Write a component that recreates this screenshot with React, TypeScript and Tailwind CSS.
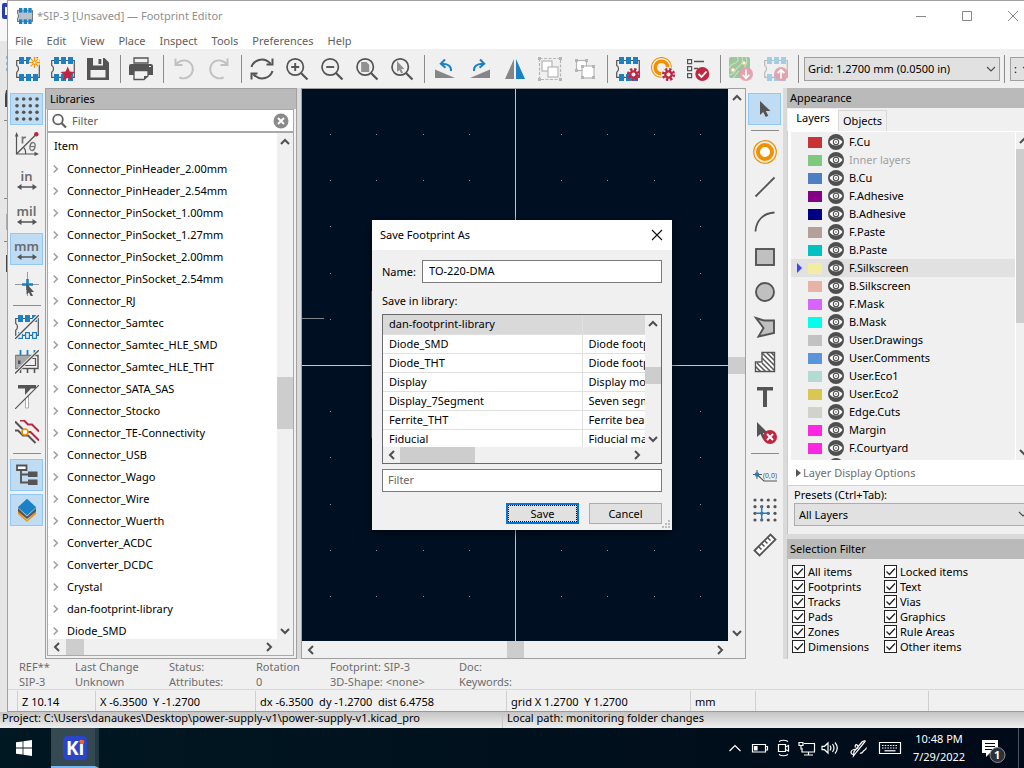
import React, { useState } from "react";

const DARK = "#545454";
const BLUE = "#1a81c4";
const RED = "#bf2641";
const ORANGE = "#f29100";

type Kids = { children?: React.ReactNode };

function Icon({ children }: Kids) {
  return (
    <svg viewBox="0 0 24 24" className="block size-6 shrink-0" fill="none" aria-hidden="true">
      {children}
    </svg>
  );
}

/* ---------- icon parts ---------- */

function Chip({ pad = BLUE, line = DARK, hollow = false }: { pad?: string; line?: string; hollow?: boolean }) {
  return (
    <>
      <path d="M3 3.5H.7v5c2.4 1 2.4 5.5 0 6.8v5H3M22 3.5h1.3v16.8H22M8 3.5h2M15 3.5h2M8 20.3h2M15 20.3h2" stroke={line} strokeWidth="1.2" />
      {[3, 10, 17].map((x) => (
        <React.Fragment key={x}>
          <rect x={x} y="0" width="5" height="7" fill={pad} />
          {hollow ? (
            <rect x={x + 0.6} y="17.6" width="3.8" height="5.8" stroke={pad} strokeWidth="1.2" />
          ) : (
            <rect x={x} y="17" width="5" height="7" fill={pad} />
          )}
        </React.Fragment>
      ))}
    </>
  );
}

function Gear() {
  return (
    <g>
      <circle cx="17.5" cy="17.5" r="4.3" fill={RED} />
      <circle cx="17.5" cy="17.5" r="5.2" stroke={RED} strokeWidth="2.8" strokeDasharray="2.3 1.784" />
      <circle cx="17.5" cy="17.5" r="2" fill="#f0f0f0" />
    </g>
  );
}

function ArrowBadge({ up }: { up?: boolean }) {
  return (
    <g opacity="0.95">
      <circle cx="17" cy="17" r="7" fill="#e5a0ae" />
      <path d={up ? "M17 21.5v-8M13.6 16.2 17 12.8l3.4 3.4" : "M17 12.5v8M13.6 17.8l3.4 3.4 3.4-3.4"} stroke="#fff" strokeWidth="1.7" />
    </g>
  );
}

function Lens({ children }: Kids) {
  return (
    <Icon>
      <circle cx="10.2" cy="10" r="8.2" stroke={DARK} strokeWidth="1.7" />
      <path d="m16 16 6.5 6.5" stroke={DARK} strokeWidth="2.2" />
      {children}
    </Icon>
  );
}

function Units({ label }: { label: string }) {
  return (
    <span className="flex flex-col items-center text-[13px] font-semibold text-[#6c6c6c]">
      <span className="h-[15px] leading-[15px]">{label}</span>
      <svg viewBox="0 0 20 6" className="block h-1.5 w-5" aria-hidden="true">
        <path d="M0 3 4.5 0v2.3h11V0L20 3l-4.5 3V3.7h-11V6z" fill={DARK} />
      </svg>
    </span>
  );
}

/* ---------- toolbar icons ---------- */

const icons: Record<string, React.ReactNode> = {
  newFootprint: (
    <Icon>
      <Chip />
      <circle cx="18.5" cy="5.5" r="5.5" fill="#f0f0f0" />
      <path d="M18.5 0v11M13 5.5h11M14.7 1.7l7.6 7.6M22.3 1.7l-7.6 7.6" stroke={ORANGE} strokeWidth="1.1" />
      <circle cx="18.5" cy="5.5" r="1.5" fill="#fff" stroke={ORANGE} strokeWidth=".8" />
    </Icon>
  ),
  star: (
    <Icon>
      <Chip />
      <path d="m16.7 9.5 2.1 5 5.2.4-4 3.4 1.3 5.2-4.6-2.8-4.6 2.8 1.3-5.2-4-3.4 5.200-.4z" fill={RED} />
    </Icon>
  ),
  save: (
    <Icon>
      <path d="M1 1h17.5L23 5.5V23H1z" fill={DARK} />
      <path d="M7 1h10v7.5H7z" fill="#f0f0f0" />
      <path d="M12.5 2h2.8v5h-2.8z" fill={DARK} />
      <path d="M4.5 13h15v7.5h-15z" fill="#f0f0f0" />
    </Icon>
  ),
  print: (
    <Icon>
      <path d="M5 1h14v5H5z" fill="#f0f0f0" stroke={DARK} strokeWidth="1.3" />
      <path d="M2 7h20a2 2 0 0 1 2 2v9h-5v-4H5v4H0V9a2 2 0 0 1 2-2" fill={DARK} />
      <path d="M5 13.5h14V19l-4 3.5H5z" fill="#f0f0f0" stroke={DARK} strokeWidth="1.3" />
      <path d="M15 22.5V19h4z" fill={DARK} />
      <path d="M20 9.5h1.8" stroke="#fff" />
    </Icon>
  ),
  undo: (
    <Icon>
      <path d="M3.500 1.500V8h7M4 7.500C8 2.500 15 2 18.800 6.500c3.400 4.200 2.400 10.500-2.300 13.400-2.800 1.700-6.400 1.800-9.200.4" stroke="#c0c0c0" strokeWidth="1.9" />
    </Icon>
  ),
  redo: (
    <Icon>
      <path d="M20.500 1.500V8h-7M20 7.500C16 2.500 9 2 5.200 6.500c-3.400 4.200-2.400 10.500 2.300 13.400 2.800 1.700 6.400 1.800 9.200.4" stroke="#c0c0c0" strokeWidth="1.9" />
    </Icon>
  ),
  refresh: (
    <Icon>
      <path d="M1.500 10C3.500 3.500 13-1 20.500 6.500M22.500 1.500v6h-6M22.500 14c-2 6.500-11.500 11-19 3.500M1.500 22.500v-6h6" stroke={DARK} strokeWidth="2" />
    </Icon>
  ),
  zoomIn: (
    <Lens>
      <path d="M10.200 6v8M6.200 10h8" stroke={DARK} strokeWidth="1.9" />
    </Lens>
  ),
  zoomOut: (
    <Lens>
      <path d="M6.200 10h8" stroke={DARK} strokeWidth="1.9" />
    </Lens>
  ),
  zoomPage: (
    <Lens>
      <path d="M6.200 5h5.300l2.700 2.700V15h-8z" fill="#909090" />
    </Lens>
  ),
  zoomPointer: (
    <Lens>
      <path d="M7 4v11l2.400-2 1.800 3.600 1.800-.9-1.800-3.600h3.200z" fill="#909090" />
    </Lens>
  ),
  rotateLeft: (
    <Icon>
      <path d="M2 12.500V21h20z" fill="#868686" />
      <path d="M18 14c.5-5-3.500-7.500-8.500-7M12 2.500 7.800 6.700l4.700 4" stroke={BLUE} strokeWidth="2" />
    </Icon>
  ),
  rotateRight: (
    <Icon>
      <path d="M22 12.500V21H2z" fill="#868686" />
      <path d="M6 14c-.5-5 3.500-7.500 8.500-7M12 2.500l4.200 4.200-4.700 4" stroke={BLUE} strokeWidth="2" />
    </Icon>
  ),
  mirror: (
    <Icon>
      <path d="M11 2v20H2z" fill="#868686" />
      <path d="M13 2v20h9z" fill={BLUE} />
    </Icon>
  ),
  group: (
    <Icon>
      <rect x="1.5" y="1.5" width="21" height="21" stroke="#b5b5b5" strokeWidth="1.2" strokeDasharray="3 1.5" />
      <rect x="4" y="4" width="10" height="10" fill="#fff" stroke="#b5b5b5" strokeWidth="1.2" />
      <rect x="10" y="10" width="10" height="10" fill="#fff" stroke="#b5b5b5" strokeWidth="1.2" />
      <path d="M0 0h3v3H0zM21 0h3v3h-3zM0 21h3v3H0zM21 21h3v3h-3z" fill="#b5b5b5" />
    </Icon>
  ),
  ungroup: (
    <Icon>
      <rect x="3.5" y="3.5" width="10" height="10" fill="#fff" stroke="#b5b5b5" strokeWidth="1.2" />
      <rect x="9" y="9" width="12" height="12" fill="#fff" stroke="#b5b5b5" strokeWidth="1.2" />
      <path d="M2 2h3v3H2zM12 2h3v3h-3zM2 12h3v3H2zM8 8h3v3H8zM19 8h3v3h-3zM8 19h3v3H8zM19 19h3v3h-3z" fill="#b5b5b5" />
    </Icon>
  ),
  footprintProps: (
    <Icon>
      <Chip />
      <Gear />
    </Icon>
  ),
  padProps: (
    <Icon>
      <circle cx="10.5" cy="10.5" r="10" stroke={ORANGE} strokeWidth="1.1" />
      <circle cx="10.5" cy="10.5" r="6.3" stroke={ORANGE} strokeWidth="3.6" />
      <circle cx="17.5" cy="17.5" r="7.5" fill="#f0f0f0" />
      <Gear />
    </Icon>
  ),
  checker: (
    <Icon>
      <path d="M1.600 2.600h4v4h-4zM1.600 9.600h4v4h-4zM1.600 16.600h4v4h-4z" stroke={DARK} strokeWidth="1.2" />
      <path d="M8 4.500h10M8 11.500h4" stroke={DARK} strokeWidth="1.3" />
      <circle cx="16.3" cy="17" r="7" fill={RED} />
      <path d="m12.500 17 3 3 5-5.500" stroke="#fff" strokeWidth="1.8" />
    </Icon>
  ),
  loadBoard: (
    <Icon>
      <rect width="21" height="21" rx="2" fill="#9cc69c" />
      <path d="M8 0c3 4-1 6-4 7s-3 3-4 4M13 0c2 5-1 8-4 10s-2 7-9 8M17 0c2 5 0 8-2 11M4 21c3-2 3-5 6-7" stroke="#c9e0c8" strokeWidth="1.1" />
      <circle cx="4" cy="13" r="1.8" fill="#fff" stroke="#f5d4a0" />
      <circle cx="15" cy="6" r="1.5" fill="#fff" stroke="#f5d4a0" />
      <ArrowBadge />
    </Icon>
  ),
  insertBoard: (
    <Icon>
      <Chip pad="#a3cde6" line="#b9b9b9" />
      <ArrowBadge up />
    </Icon>
  ),
  grid: (
    <Icon>
      {[2, 8.7, 15.3, 22].map((y) => [2, 8.7, 15.3, 22].map((x) => <circle key={`${x}-${y}`} cx={x} cy={y} r="1.8" fill={DARK} />))}
    </Icon>
  ),
  polar: (
    <Icon>
      <path d="M1.500 22 21 2.500" stroke={DARK} strokeWidth="1.3" />
      <path d="M1.500 4v18H20M8.500 15.500c1.800 1.500 2.300 4 2 6.500" stroke={DARK} strokeWidth="1.2" />
      <path d="M1.500 0 3.500 4.500H0zM24 22l-4.500-2.200v4.200z" fill={DARK} />
      <circle cx="21.3" cy="2.3" r="2.2" fill={RED} />
      <path d="M7.500 4.500v7M7.500 8c0-2 1.500-3 3.500-2.600" stroke="#777" strokeWidth="1.7" />
      <ellipse cx="17.5" cy="14.5" rx="2.5" ry="4" stroke="#777" strokeWidth="1.4" transform="rotate(12 17.5 14.5)" />
      <path d="M15 14.500h5" stroke="#777" strokeWidth="1.2" />
    </Icon>
  ),
  inch: <Units label="in" />,
  mil: <Units label="mil" />,
  mm: <Units label="mm" />,
  cursor: (
    <Icon>
      <path d="M12.500 0v24M0 12.500h24" stroke="#9a9a9a" />
      <path d="M12.500 7v11M7 12.500h11" stroke={BLUE} strokeWidth="2.6" />
      <path d="M11.500 11.500v11l2.500-2 2 4.500 2-1-2-4h3z" fill={DARK} />
    </Icon>
  ),
  padSketch: (
    <Icon>
      <Chip hollow />
      <path d="M0 24 24 0" stroke="#f0f0f0" strokeWidth="3.5" />
      <path d="M0 24 24 0" stroke={DARK} strokeWidth="1.3" />
    </Icon>
  ),
  graphicSketch: (
    <Icon>
      <path d="M5.500 0v5M12.500 0v5M19.500 0v5" stroke={BLUE} strokeWidth="1.8" />
      <path d="M5.500 18v5M12.500 18v5M19.500 18v5" stroke={DARK} strokeWidth="1.6" />
      <rect x="1" y="5.5" width="22" height="13" fill="#f0f0f0" stroke={DARK} strokeWidth="1.4" />
      <path d="M1 5.500h17.500l-13 13H1z" fill="#a8a8a8" />
      <path d="M16 8.500h4.500v7H9" stroke={DARK} strokeWidth="1.2" />
      <path d="M3 10.500h2.500v3.500H3z" fill={DARK} />
      <path d="M0 23.500 24 0" stroke="#f0f0f0" strokeWidth="3" />
      <path d="M0 23.500 24 0" stroke={DARK} strokeWidth="1.3" />
    </Icon>
  ),
  textSketch: (
    <Icon>
      <path d="M3 0h18v3.500h-5L10 10V3.500H3z" fill={DARK} />
      <path d="M10.500 13.500V23h3V10.500z" stroke="#aaa" fill="#fff" />
      <path d="M0 24 24 0" stroke={DARK} strokeWidth="1.2" />
    </Icon>
  ),
  contrast: (
    <Icon>
      <path d="M5 .5h4l4 4h4l7 7" stroke={RED} strokeWidth="2" />
      <path d="M12.500 12h3l8.500 8.500" stroke={RED} strokeWidth="2" />
      <path d="M0 1.500 8 9.500M0 10.500h3l5 5h5l7.500 7.500" stroke={DARK} strokeWidth="2" />
      <circle cx="10" cy="12" r="3" fill="#fff" stroke={ORANGE} strokeWidth="1.6" />
    </Icon>
  ),
  tree: (
    <Icon>
      <path d="M2 2.500h9.500V7H2z" fill="#fff" stroke={DARK} strokeWidth="1.8" />
      <path d="M6 7v12.500h7M6 11.500h7" stroke={DARK} strokeWidth="1.9" />
      <path d="M13 8.500h9.500V14H13zM13 16.500h9.500V22H13z" fill={DARK} />
    </Icon>
  ),
  layers: (
    <Icon>
      <path d="m3 13 9 9 9-9v3l-9 7.700L3 16z" fill={ORANGE} />
      <path d="m3 10 9 8.500 9-8.500v3.500L12 21l-9-7.500z" fill={DARK} />
      <path d="m12 .8 9.200 8.400-9.200 8.300-9.200-8.300z" fill={BLUE} />
    </Icon>
  ),
  pointer: (
    <Icon>
      <path d="M7 4v14l3.200-3 2.500 5 2.600-1.200-2.500-4.900h4.700z" fill={DARK} />
    </Icon>
  ),
  pad: (
    <Icon>
      <circle cx="12" cy="12" r="11.3" stroke={ORANGE} strokeWidth="1.2" />
      <circle cx="12" cy="12" r="7" fill="#fff" stroke={ORANGE} strokeWidth="4" />
    </Icon>
  ),
  line: (
    <Icon>
      <path d="M2.500 21.500 21.500 2.500" stroke={DARK} strokeWidth="1.8" />
    </Icon>
  ),
  arc: (
    <Icon>
      <path d="M2.500 21.500C3 11 10 3 21.500 2.500" stroke={DARK} strokeWidth="1.8" />
    </Icon>
  ),
  rect: (
    <Icon>
      <rect x="3" y="4" width="18" height="16" fill="#c0c0c0" stroke={DARK} strokeWidth="1.9" />
    </Icon>
  ),
  circle: (
    <Icon>
      <circle cx="12" cy="12" r="9" fill="#c0c0c0" stroke={DARK} strokeWidth="1.9" />
    </Icon>
  ),
  polygon: (
    <Icon>
      <path d="m3 3 8 2.500L21 5.500V18L5.500 21.500 10.500 13z" fill="#c0c0c0" stroke={DARK} strokeWidth="1.9" />
    </Icon>
  ),
  zone: (
    <Icon>
      <path d="M9 2.500h12.500v19h-19V12H9z" fill="#fff" stroke={DARK} strokeWidth="1.4" />
      <path d="m9 3 12.500 12.500M14 3l7.500 7.500M9 8l12.500 12.500M9 13l8.500 8.500M4 13l8.500 8.500M2.500 16.500l5 5M18 2.500l3.500 3.500" stroke={DARK} strokeWidth="1.5" />
    </Icon>
  ),
  text: (
    <Icon>
      <path d="M4 2h16v3.500h-6V22h-4V5.500H4z" fill={DARK} />
    </Icon>
  ),
  erase: (
    <Icon>
      <path d="M4 2v15l3.500-3 2.500 5.500 2.500-1-2.500-5.500h5z" fill={DARK} />
      <circle cx="17" cy="17" r="7" fill={RED} />
      <path d="m14 14 6 6M20 14l-6 6" stroke="#fff" strokeWidth="2" />
    </Icon>
  ),
  anchor: (
    <Icon>
      <path d="M4 7v9M0 11.500h9" stroke={DARK} />
      <circle cx="4" cy="11.5" r="2.2" fill={BLUE} />
      <path d="M5 12.500 11 18h13" stroke={DARK} strokeWidth="1.1" />
      <text x="10" y="15" fontSize="7" fill={DARK} fontFamily="Noto Sans, sans-serif">
        (0,0)
      </text>
    </Icon>
  ),
  gridOrigin: (
    <Icon>
      {[2, 8.7, 15.3, 22].map((y) => [2, 8.7, 15.3, 22].map((x) => <circle key={`${x}-${y}`} cx={x} cy={y} r="1.6" fill={DARK} />))}
      <path d="M8.700 7v16M2 15.300h14" stroke={BLUE} strokeWidth="1.5" />
    </Icon>
  ),
  ruler: (
    <Icon>
      <path d="M1.500 17.500 17.500 1.500l5 5-16 16z" fill="#fff" stroke={DARK} strokeWidth="1.8" />
      <path d="m6 14 2.500 2.500M9 11l2.500 2.500M12 8l2.500 2.500M15 5l2.500 2.500" stroke={DARK} strokeWidth="1.5" />
    </Icon>
  ),
};

type Tool = { icon: string; label: string; active?: boolean } | "sep";

function ToolList({ tools, vertical }: { tools: Tool[]; vertical?: boolean }) {
  return (
    <>
      {tools.map((t, i) =>
        t === "sep" ? (
          <span key={i} className={vertical ? "my-0.5 h-px w-7 shrink-0 bg-[#8c8c8c]" : "mr-px ml-[3px] h-7 w-px shrink-0 bg-[#8c8c8c]"} />
        ) : (
          <button
            key={i}
            type="button"
            aria-label={t.label}
            aria-pressed={!!t.active}
            className={`flex h-8 shrink-0 items-center justify-center border ${vertical ? "w-[33px]" : "w-8"} ${
              t.active ? "border-[#90c8f6] bg-[#c0dcf3]" : "border-transparent"
            }`}
          >
            {icons[t.icon]}
          </button>
        )
      )}
    </>
  );
}

const topTools: Tool[] = [
  { icon: "newFootprint", label: "New footprint" },
  { icon: "star", label: "New footprint using wizard" },
  { icon: "save", label: "Save" },
  "sep",
  { icon: "print", label: "Print" },
  "sep",
  { icon: "undo", label: "Undo" },
  { icon: "redo", label: "Redo" },
  "sep",
  { icon: "refresh", label: "Refresh" },
  { icon: "zoomIn", label: "Zoom in" },
  { icon: "zoomOut", label: "Zoom out" },
  { icon: "zoomPage", label: "Zoom to fit" },
  { icon: "zoomPointer", label: "Zoom to selection" },
  "sep",
  { icon: "rotateLeft", label: "Rotate counterclockwise" },
  { icon: "rotateRight", label: "Rotate clockwise" },
  { icon: "mirror", label: "Mirror" },
  { icon: "group", label: "Group" },
  { icon: "ungroup", label: "Ungroup" },
  "sep",
  { icon: "footprintProps", label: "Footprint properties" },
  { icon: "padProps", label: "Default pad properties" },
  { icon: "checker", label: "Footprint checker" },
  "sep",
  { icon: "loadBoard", label: "Load footprint from board" },
  { icon: "insertBoard", label: "Insert footprint into board" },
  "sep",
];

const leftTools: Tool[] = [
  { icon: "grid", label: "Show grid", active: true },
  { icon: "polar", label: "Polar coordinates" },
  { icon: "inch", label: "Inches" },
  { icon: "mil", label: "Mils" },
  { icon: "mm", label: "Millimeters", active: true },
  { icon: "cursor", label: "Full-window crosshair" },
  "sep",
  { icon: "padSketch", label: "Sketch pads" },
  { icon: "graphicSketch", label: "Sketch graphics" },
  { icon: "textSketch", label: "Sketch text" },
  { icon: "contrast", label: "High contrast" },
  "sep",
  { icon: "tree", label: "Footprint tree", active: true },
  { icon: "layers", label: "Layers manager", active: true },
];

const rightTools: Tool[] = [
  { icon: "pointer", label: "Select", active: true },
  "sep",
  { icon: "pad", label: "Add pad" },
  { icon: "line", label: "Draw line" },
  { icon: "arc", label: "Draw arc" },
  { icon: "rect", label: "Draw rectangle" },
  { icon: "circle", label: "Draw circle" },
  { icon: "polygon", label: "Draw polygon" },
  { icon: "zone", label: "Add rule area" },
  { icon: "text", label: "Add text" },
  { icon: "erase", label: "Delete" },
  "sep",
  { icon: "anchor", label: "Set anchor" },
  { icon: "gridOrigin", label: "Set grid origin" },
  { icon: "ruler", label: "Measure" },
];

/* ---------- small widgets ---------- */

const chevrons = {
  up: "M1 7 5 3l4 4",
  down: "m1 3 4 4 4-4",
  left: "M7 1 3 5l4 4",
  right: "m3 1 4 4-4 4",
};

function Chevron({ dir, thin }: { dir: keyof typeof chevrons; thin?: boolean }) {
  return (
    <svg viewBox="0 0 10 10" className="block size-2.5" fill="none" aria-hidden="true">
      <path d={chevrons[dir]} stroke="#505050" strokeWidth={thin ? 1.2 : 2} />
    </svg>
  );
}

type ScrollProps = { before: string; after: string; thumb: string; size?: string };

/* the grow values of before and after split the free track around the thumb */
function VScroll({ before, after, thumb, size = "w-4" }: ScrollProps) {
  return (
    <div className={`flex shrink-0 flex-col items-center bg-[#f0f0f0] ${size}`}>
      <button type="button" aria-label="Scroll up" className="flex h-[17px] w-full shrink-0 items-center justify-center">
        <Chevron dir="up" />
      </button>
      <span className={before} />
      <span className={`w-full shrink-0 bg-[#cdcdcd] ${thumb}`} />
      <span className={after} />
      <button type="button" aria-label="Scroll down" className="flex h-[17px] w-full shrink-0 items-center justify-center">
        <Chevron dir="down" />
      </button>
    </div>
  );
}

function HScroll({ before, after, thumb, size = "h-4" }: ScrollProps) {
  return (
    <div className={`flex min-w-0 flex-1 items-center bg-[#f0f0f0] ${size}`}>
      <button type="button" aria-label="Scroll left" className="flex h-full w-[17px] shrink-0 items-center justify-center">
        <Chevron dir="left" />
      </button>
      <span className={before} />
      <span className={`h-full shrink-0 bg-[#cdcdcd] ${thumb}`} />
      <span className={after} />
      <button type="button" aria-label="Scroll right" className="flex h-full w-[17px] shrink-0 items-center justify-center">
        <Chevron dir="right" />
      </button>
    </div>
  );
}

/* ---------- libraries ---------- */

const libraries = [
  "Connector_PinHeader_2.00mm",
  "Connector_PinHeader_2.54mm",
  "Connector_PinSocket_1.00mm",
  "Connector_PinSocket_1.27mm",
  "Connector_PinSocket_2.00mm",
  "Connector_PinSocket_2.54mm",
  "Connector_RJ",
  "Connector_Samtec",
  "Connector_Samtec_HLE_SMD",
  "Connector_Samtec_HLE_THT",
  "Connector_SATA_SAS",
  "Connector_Stocko",
  "Connector_TE-Connectivity",
  "Connector_USB",
  "Connector_Wago",
  "Connector_Wire",
  "Connector_Wuerth",
  "Converter_ACDC",
  "Converter_DCDC",
  "Crystal",
  "dan-footprint-library",
  "Diode_SMD",
];

function LibraryPanel() {
  return (
    <section className="flex w-[252px] shrink-0 flex-col border border-[#a0a0a0] bg-[#f0f0f0]">
      <h2 className="h-5 shrink-0 bg-[#bababa] px-1 leading-5">Libraries</h2>
      <div className="mr-0.5 ml-px flex h-[23px] shrink-0 items-center gap-1 border border-[#a9a9ad] bg-white px-1">
        <svg viewBox="0 0 16 16" className="block size-4" fill="none" aria-hidden="true">
          <circle cx="6" cy="6.5" r="4.8" stroke="#606060" strokeWidth="1.8" />
          <path d="m9.500 10 4.500 4.500" stroke="#606060" strokeWidth="2.2" />
        </svg>
        <input aria-label="Filter libraries" placeholder="Filter" className="min-w-0 flex-1 bg-transparent leading-4 outline-none placeholder:text-[#5c5c5c]" />
        <button type="button" aria-label="Clear filter">
          <svg viewBox="0 0 16 16" className="block size-4" fill="none" aria-hidden="true">
            <circle cx="8" cy="8" r="7.5" fill="#8a8a8a" />
            <path d="m5 5 6 6M11 5l-6 6" stroke="#fff" strokeWidth="1.9" />
          </svg>
        </button>
      </div>
      <div className="mr-0.5 mb-0.5 ml-px flex min-h-0 flex-1 flex-col border border-[#a9a9ad] bg-white">
        <div className="flex min-h-0 flex-1">
          <div className="min-w-0 flex-1 overflow-hidden">
            <div className="h-[25px] px-1.5 leading-[25px]">Item</div>
            <ul>
              {libraries.map((name) => (
                <li key={name}>
                  <button type="button" className="flex h-[22px] w-full items-center gap-[7px] pl-1 text-left whitespace-nowrap">
                    <svg viewBox="0 0 9 10" className="block h-2.5 w-2" fill="none" aria-hidden="true">
                      <path d="m2 1 4 4-4 4" stroke="#a0a0a0" strokeWidth="1.8" />
                    </svg>
                    {name}
                  </button>
                </li>
              ))}
            </ul>
          </div>
          <VScroll before="grow-[227]" thumb="h-[52px]" after="grow-[193]" />
        </div>
        <div className="flex shrink-0">
          <HScroll before="w-px" thumb="w-[18px]" after="grow" />
          <span className="w-4 bg-[#f0f0f0]" />
        </div>
      </div>
    </section>
  );
}

/* ---------- canvas ---------- */

function Canvas() {
  const xs = [-4, -3, -2, -1, 0, 1, 2, 3, 4].map((i) => Math.round(213 + i * 46.2));
  const ys = [-5, -4, -3, -2, -1, 0, 1, 2, 3, 4, 5].map((i) => Math.round(276 + i * 46.2));
  return (
    <div className="relative flex min-w-0 flex-1 flex-col border border-[#a0a0a0]">
      <div className="flex min-h-0 flex-1">
        <div className="min-w-0 flex-1 overflow-hidden bg-[#001023]">
          <svg viewBox="0 0 426 552" preserveAspectRatio="xMidYMid slice" className="block h-full w-full" shapeRendering="crispEdges" aria-hidden="true">
            {ys.map((y) => xs.map((x) => <rect key={`${x}-${y}`} x={x} y={y} width="1" height="1" fill="#8d949c" />))}
            <path d="M213 0h1v552h-1zM0 276h426v1H0z" fill="#c4c8cc" />
            <path d="M0 229h22v1H0z" fill="#7f8488" />
            <path d="M69 202h1v147h-1z" fill="#4a5058" />
          </svg>
        </div>
        <VScroll before="grow" thumb="h-[17px]" after="grow" size="w-[17px]" />
      </div>
      <div className="flex shrink-0">
        <HScroll before="grow" thumb="w-[17px]" after="grow" size="h-[17px]" />
        <span className="w-[17px] bg-[#f0f0f0]" />
      </div>
      <SaveDialog />
    </div>
  );
}

const dialogRows: [string, string][] = [
  ["dan-footprint-library", ""],
  ["Diode_SMD", "Diode footprints"],
  ["Diode_THT", "Diode footprints"],
  ["Display", "Display modules"],
  ["Display_7Segment", "Seven segment"],
  ["Ferrite_THT", "Ferrite bead"],
  ["Fiducial", "Fiducial markings"],
];

function SaveDialog() {
  const [name, setName] = useState("TO-220-DMA");
  return (
    <div role="dialog" aria-label="Save Footprint As" className="absolute top-[131px] left-[70px] w-[300px] bg-[#f0f0f0] shadow-[0_2px_10px_rgba(0,0,0,0.6)]">
      <header className="flex h-[30px] items-center justify-between bg-white px-2">
        <h2>Save Footprint As</h2>
        <button type="button" aria-label="Close" className="mr-px">
          <svg viewBox="0 0 12 12" className="block size-3" fill="none" aria-hidden="true">
            <path d="m1 1 10 10M11 1 1 11" stroke="#111" strokeWidth="1.1" />
          </svg>
        </button>
      </header>
      <div className="flex flex-col px-2.5 pt-2.5 pb-1.5">
        <div className="flex items-center gap-1">
          <label htmlFor="fp-name" className="w-9 whitespace-nowrap">
            Name:
          </label>
          <input
            id="fp-name"
            value={name}
            onChange={(e) => setName(e.target.value)}
            className="h-[23px] min-w-0 flex-1 border border-[#7a7a7a] bg-white px-1.5 pb-0.5 outline-none"
          />
        </div>
        <p className="mt-2.5 leading-4">Save in library:</p>
        <div className="mt-[5px] flex h-[150px] flex-col border border-[#6a6a6a] bg-white">
          <div className="flex min-h-0 flex-1">
            <div className="min-w-0 flex-1 overflow-hidden">
              <table className="w-[360px] table-fixed border-collapse">
                <colgroup>
                  <col className="w-[199px]" />
                  <col />
                </colgroup>
                <tbody>
                  {dialogRows.map(([lib, desc], i) => (
                    <tr key={lib} className={`h-[19px] border-b border-[#e0e0e0] ${i === 0 ? "bg-[#d9d9d9]" : ""}`}>
                      <td className="border-r border-[#e0e0e0] pl-1.5 leading-[18px]">{lib}</td>
                      <td className="pl-1.5 leading-[18px] whitespace-nowrap">{desc}</td>
                    </tr>
                  ))}
                </tbody>
              </table>
            </div>
            <VScroll before="grow-[35]" thumb="h-[17px]" after="grow-[46]" />
          </div>
          <div className="flex shrink-0">
            <HScroll before="w-0" thumb="w-[75px]" after="grow" />
            <span className="w-4 bg-[#f0f0f0]" />
          </div>
        </div>
        <input aria-label="Filter list" placeholder="Filter" className="mt-[5px] h-[23px] border border-[#7a7a7a] bg-white px-[5px] pb-0.5 outline-none placeholder:text-[#666666]" />
        <div className="mt-[11px] flex justify-end gap-2.5">
          <button type="button" className="h-[21px] w-[73px] border-2 border-[#0078d7] bg-[#e1e1e1]">
            <span className="block border border-dotted border-black leading-[15px]">Save</span>
          </button>
          <button type="button" className="h-[21px] w-[73px] border border-[#adadad] bg-[#e1e1e1] leading-4">
            Cancel
          </button>
        </div>
      </div>
      <svg viewBox="0 0 8 8" className="absolute right-0.5 bottom-0.5 size-2" aria-hidden="true">
        <path d="M6 0h2v2H6zM3 3h2v2H3zM6 3h2v2H6zM0 6h2v2H0zM3 6h2v2H3zM6 6h2v2H6z" fill="#bdbdbd" />
      </svg>
    </div>
  );
}

/* ---------- appearance ---------- */

const layers: { name: string; color: string; off?: boolean; current?: boolean }[] = [
  { name: "F.Cu", color: "#c83434" },
  { name: "Inner layers", color: "#7fc87f", off: true },
  { name: "B.Cu", color: "#4d7fc4" },
  { name: "F.Adhesive", color: "#840084" },
  { name: "B.Adhesive", color: "#000084" },
  { name: "F.Paste", color: "#b4a09a" },
  { name: "B.Paste", color: "#00c2c2" },
  { name: "F.Silkscreen", color: "#f2eda1", current: true },
  { name: "B.Silkscreen", color: "#e8b2a7" },
  { name: "F.Mask", color: "#d864ff" },
  { name: "B.Mask", color: "#02ffee" },
  { name: "User.Drawings", color: "#c2c2c2" },
  { name: "User.Comments", color: "#5994dc" },
  { name: "User.Eco1", color: "#b4dbd2" },
  { name: "User.Eco2", color: "#d8c852" },
  { name: "Edge.Cuts", color: "#d0d2cd" },
  { name: "Margin", color: "#ff26e2" },
  { name: "F.Courtyard", color: "#ff26e2" },
  { name: "", color: "transparent" },
];

function Eye() {
  return (
    <svg viewBox="0 0 16 16" className="block size-4" fill="none" aria-hidden="true">
      <circle cx="8" cy="8" r="8" fill="#4f4f4f" />
      <path d="M1.500 8C4.500 3.300 11.500 3.300 14.500 8c-3 4.700-10 4.700-13 0" fill="#fff" />
      <circle cx="8" cy="8" r="2.7" fill="#fff" stroke="#4f4f4f" strokeWidth="1.1" />
      <circle cx="8" cy="8" r="1" fill="#999" />
    </svg>
  );
}

const filters: [string, string][] = [
  ["All items", "Locked items"],
  ["Footprints", "Text"],
  ["Tracks", "Vias"],
  ["Pads", "Graphics"],
  ["Zones", "Rule Areas"],
  ["Dimensions", "Other items"],
];

function Check({ label }: { label: string }) {
  return (
    <label className="flex h-[15px] items-center gap-[3px] whitespace-nowrap">
      <span className="relative block size-[13px] shrink-0">
        <input type="checkbox" defaultChecked className="peer block size-[13px] appearance-none border border-[#222222] bg-white" />
        <svg viewBox="0 0 13 13" className="pointer-events-none absolute inset-0 hidden size-[13px] peer-checked:block" fill="none" aria-hidden="true">
          <path d="m2.500 6.500 3 3 5.500-6" stroke="#222" strokeWidth="1.3" />
        </svg>
      </span>
      {label}
    </label>
  );
}

function AppearancePanel() {
  return (
    <aside className="flex w-[241px] shrink-0 flex-col overflow-hidden border-l-4 border-[#dadada] bg-[#f0f0f0]">
      <h2 className="h-5 shrink-0 bg-[#bababa] px-[3px] leading-5">Appearance</h2>
      <div role="tablist" className="flex h-[23px] shrink-0 items-end pl-px">
        <button type="button" role="tab" aria-selected="true" className="h-[22px] w-[50px] bg-white pb-1 leading-4">
          Layers
        </button>
        <button type="button" role="tab" aria-selected="false" className="h-[21px] w-[49px] border border-b-0 border-[#d9d9d9] bg-[#f0f0f0] leading-4">
          Objects
        </button>
      </div>
      <div className="flex min-h-0 flex-1 flex-col border-b border-l border-[#d0d0d0] bg-white">
        <div className="flex min-h-0 flex-1 pt-px pl-[3px]">
          <ul className="min-h-0 min-w-0 flex-1 overflow-hidden bg-[#f0f0f0] pt-px">
            {layers.map((l, i) => (
              <li key={i} className={`flex h-[18px] items-center ${l.current ? "bg-[#e1e1e1]" : ""}`}>
                <span className="flex w-[17px] justify-center">
                  {l.current && (
                    <svg viewBox="0 0 5 10" className="block h-2.5 w-[5px]" aria-hidden="true">
                      <path d="m0 0 5 5-5 5z" fill="#3a46f5" />
                    </svg>
                  )}
                </span>
                <span className="h-[11px] w-3.5" style={{ backgroundColor: l.color }} />
                <button type="button" aria-label="Toggle visibility" className="mr-[5px] ml-1.5">
                  <Eye />
                </button>
                <span className={l.off ? "text-[#a0a0a0]" : ""}>{l.name}</span>
              </li>
            ))}
          </ul>
          <div className="ml-px flex w-2 shrink-0 flex-col overflow-hidden">
            <div className="flex min-h-0 w-4 flex-1">
              <VScroll before="h-0" thumb="h-[174px]" after="grow" />
            </div>
          </div>
        </div>
        <button type="button" className="flex h-[25px] shrink-0 items-center gap-0.5 pl-2 text-left text-[#6d6d6d]">
          <svg viewBox="0 0 5 8" className="block h-2 w-[5px]" aria-hidden="true">
            <path d="m0 0 5 4-5 4z" fill="#555" />
          </svg>
          Layer Display Options
        </button>
      </div>
      <div className="flex h-12 shrink-0 flex-col border-l border-[#c4c4c4] pl-1.5">
        <label htmlFor="presets" className="h-[17px] leading-[17px]">
          Presets (Ctrl+Tab):
        </label>
        <div className="relative w-[240px]">
          <select id="presets" className="block h-[23px] w-full appearance-none border border-[#adadad] bg-[#e1e1e1] px-1">
            <option>All Layers</option>
          </select>
          <span className="pointer-events-none absolute top-1.5 right-1.5">
            <Chevron dir="down" thin />
          </span>
        </div>
      </div>
      <h2 className="h-[25px] shrink-0 border-t-5 border-[#dadada] bg-[#bababa] px-[3px] leading-5">Selection Filter</h2>
      <div className="grid shrink-0 grid-cols-[92px_1fr] border-l border-[#c4c4c4] py-[5px] pl-1">
        {filters.flat().map((f) => (
          <Check key={f} label={f} />
        ))}
      </div>
    </aside>
  );
}

/* ---------- window chrome ---------- */

function TitleBar() {
  return (
    <header className="flex h-[30px] shrink-0 items-center bg-white pl-[9px] text-[#8f8f8f]">
      <svg viewBox="0 0 24 24" className="block size-4" fill="none" aria-hidden="true">
        <rect x="1" y="4" width="22" height="16" fill="#b5c3cf" />
        <Chip />
      </svg>
      <h1 className="ml-1 flex-1">*SIP-3 [Unsaved] — Footprint Editor</h1>
      <div className="flex items-center gap-9 pr-1.5">
        <button type="button" aria-label="Minimize">
          <svg viewBox="0 0 10 10" className="block size-2.5" aria-hidden="true">
            <path d="M0 5h10v1H0z" fill="#888" />
          </svg>
        </button>
        <button type="button" aria-label="Maximize">
          <svg viewBox="0 0 10 10" className="block size-2.5" aria-hidden="true">
            <path d="M.5.500h9v9h-9z" fill="none" stroke="#888" />
          </svg>
        </button>
        <button type="button" aria-label="Close window">
          <svg viewBox="0 0 10 10" className="block size-2.5" aria-hidden="true">
            <path d="m0 0 10 10M10 0 0 10" stroke="#888" />
          </svg>
        </button>
      </div>
    </header>
  );
}

const menus = ["File", "Edit", "View", "Place", "Inspect", "Tools", "Preferences", "Help"];

const info: [string, string, string][] = [
  ["REF**", "SIP-3", "w-14"],
  ["Last Change", "Unknown", "w-[94px]"],
  ["Status:", "Attributes:", "w-[87px]"],
  ["Rotation", "0", "w-[74px]"],
  ["Footprint: SIP-3", "3D-Shape: <none>", "w-[129px]"],
  ["Doc:", "Keywords:", "flex-1"],
];

const status: [string, string][] = [
  ["Z 10.14", "w-[78px]"],
  ["X -6.3500  Y -1.2700", "w-[160px]"],
  ["dx -6.3500  dy -1.2700  dist 6.4758", "w-[251px]"],
  ["grid X 1.2700  Y 1.2700", "w-[184px]"],
  ["mm", "w-[65px]"],
  ["", "w-[173px]"],
  ["", "flex-1"],
];

function Taskbar() {
  return (
    <footer className="flex h-10 shrink-0 items-stretch bg-gradient-to-r from-[#001822] to-[#000a18] text-white">
      <button type="button" aria-label="Start" className="flex w-[51px] items-center pl-4">
        <svg viewBox="0 0 16 16" className="block size-4" aria-hidden="true">
          <path d="m0 2.300 6.600-.9v6.200H0zM7.400 1.200 16 0v7.600H7.400zM0 8.400h6.600v6.200L0 13.700zM7.400 8.400H16V16l-8.600-1.200z" fill="#fff" />
        </svg>
      </button>
      <button type="button" aria-label="KiCad" className="flex w-12 items-center justify-center border-r-4 border-b-2 border-r-[#223a44] border-b-[#76b9ed] bg-[#344952] pt-0.5 pl-1">
        <svg viewBox="0 0 24 24" className="block size-6" aria-hidden="true">
          <rect width="24" height="24" rx="4" fill="#2a45c8" />
          <text x="3" y="19" fontSize="19" fontWeight="bold" fontFamily="Open Sans, sans-serif" fill="#fff">
            Ki
          </text>
          <circle cx="19" cy="6" r="2.3" fill="#f26522" />
        </svg>
      </button>
      <div className="ml-auto flex items-center">
        <svg viewBox="0 0 180 24" className="block h-6 w-[180px]" fill="none" stroke="#fff" strokeWidth="1.2" aria-hidden="true">
          <path d="m5.500 15 5.500-5.500 5.500 5.500" />
          <path d="M28.500 8.500h13V16h-13zM42 10.500h1.500V14H42" />
          <path d="M30.500 10.500h2.500V14h-2.500z" fill="#fff" />
          <path d="M54.500 8.500h7v7h-7zM61.500 11l3-1.500v5.500l-3-1.500M55 5.500q4.500-2.500 9 0M55 18.500q4.500 2.500 9 0" />
          <path d="M80 7.500h10.500V16H78v-4M84.500 16v3M80 19h9" />
          <path d="M75 6.500h4v3h-4zM77 9.500v4" />
          <path d="M98 10.300h2.500l3.500-3.300v10l-3.500-3.300H98zM106 9.500q1.800 2.500 0 5M108.500 8q3 4 0 8M111 6.500q4.500 5.500 0 11" />
          <path d="m141 5.500-8.500 10.500-3 4 .5-4.500L138 6c1.500-1.500 4-1.500 3-.5M129 18.500c-3-1-2.500-4.500 1-5s5-2 3.500-4-3 0-2 2M136 17c2 1 2.500-1 3.500-2s2.500-1 3-3.500" />
          <path d="M155.500 6.500h21v11h-21z" />
          <path d="M158 9.500h16M158 12h16" strokeDasharray="1.5 1.2" />
          <path d="M160.500 14.800h11" />
        </svg>
        <div className="w-[70px] text-center leading-[18px]">
          <div>10:48 PM</div>
          <div>7/29/2022</div>
        </div>
        <button type="button" aria-label="Notifications" className="relative ml-2">
          <svg viewBox="0 0 24 24" className="block size-6 overflow-visible" aria-hidden="true">
            <path d="M0 4h16v13H8l-4 4v-4H0z" fill="#fff" />
            <path d="M3 7.500h10M3 10.500h10M3 13.500h7" stroke="#000a18" strokeWidth="1.2" />
            <circle cx="15.5" cy="19" r="7.5" fill="#2b3138" stroke="#8a8f94" />
          </svg>
          <span className="absolute top-[11px] left-3 leading-4 font-bold">1</span>
        </button>
        <span className="ml-3 h-10 w-px bg-[#4d5660]" />
        <span className="w-[5px]" />
      </div>
    </footer>
  );
}

export default function App() {
  return (
    <div className="flex h-screen min-h-[768px] flex-col overflow-hidden bg-[#e6e6e6] font-['Noto_Sans','Open_Sans',sans-serif] text-[11px] leading-4 text-black">
      <div className="flex min-h-0 flex-1">
        <svg viewBox="0 0 7 712" className="block h-[712px] w-[7px] shrink-0" fill="none" aria-hidden="true">
          <path d="M0 0h7v41H0z" fill="#f7f7f7" />
          <path d="M7 3H4a2 2 0 0 0-2 2v12a2 2 0 0 0 2 2h3z" fill="#2a3cb4" />
          <path d="M5 7h2v8H5z" fill="#fff" />
          <path d="M7 56v18" stroke="#3c8fc8" strokeDasharray="3 3" />
          <path d="M7 90H6l-1 5v12h2zM7 255H6v17h1z" fill="#444" />
          <path d="M4 120.500h3M4 198.500h3M4 241.500h3" stroke="#888" />
          <path d="M7 214v16" stroke="#999" strokeWidth="1.5" />
        </svg>
        <main className="flex min-w-0 flex-1 flex-col border-t border-l border-[#a0a0a0] bg-[#f0f0f0]">
          <TitleBar />
          <nav className="flex h-[18px] shrink-0 items-center gap-3.5 bg-white px-[7px] pt-px text-[#606060]">
            {menus.map((m) => (
              <button key={m} type="button">
                {m}
              </button>
            ))}
          </nav>
          <div className="flex h-[39px] shrink-0 items-center gap-[3px] overflow-hidden pl-1">
            <ToolList tools={topTools} />
            <div className="relative ml-px w-[196px] shrink-0">
              <select aria-label="Grid" className="block h-6 w-full appearance-none border border-[#a0a0a0] bg-[#e1e1e1] px-[3px]">
                <option>Grid: 1.2700 mm (0.0500 in)</option>
              </select>
              <span className="pointer-events-none absolute top-[7px] right-1">
                <Chevron dir="down" thin />
              </span>
            </div>
            <span className="mr-0.5 ml-px h-7 w-px shrink-0 bg-[#8c8c8c]" />
            <div className="relative w-6 shrink-0">
              <select aria-label="Zoom" className="block h-6 w-full appearance-none border border-[#a0a0a0] bg-[#e1e1e1] px-[3px]">
                <option>:</option>
              </select>
              <span className="pointer-events-none absolute top-[7px] right-0.5">
                <Chevron dir="down" thin />
              </span>
            </div>
          </div>
          <div className="flex min-h-0 flex-1">
            <div className="flex w-[37px] shrink-0 flex-col items-center gap-[3px] pt-[5px]">
              <ToolList tools={leftTools} vertical />
            </div>
            <LibraryPanel />
            <span className="w-1 shrink-0 bg-[#dadada]" />
            <Canvas />
            <div className="flex w-[37px] shrink-0 flex-col items-center gap-[3px] pt-[5px]">
              <ToolList tools={rightTools} vertical />
            </div>
            <AppearancePanel />
          </div>
          <div className="flex h-[30px] shrink-0 pl-[11px] leading-[15px] text-[#6d6d6d]">
            {info.map(([a, b, w]) => (
              <div key={a} className={`${w} shrink-0 whitespace-nowrap`}>
                <div>{a}</div>
                <div>{b}</div>
              </div>
            ))}
          </div>
          <div className="flex h-[23px] shrink-0 border-t border-b border-t-[#d7d7d7] border-b-[#9a9a9a] pt-px pl-[9px] leading-[21px]">
            {status.map(([t, w], i) => (
              <div key={i} className={`${w} shrink-0 border-l border-[#d0d0d0] pl-1 whitespace-pre`}>
                {t}
              </div>
            ))}
          </div>
        </main>
      </div>
      <div className="flex h-4 shrink-0 bg-gradient-to-b from-[#c4c4c4] to-[#efefef] leading-[12px]">
        <div className="w-[502px] overflow-hidden pl-0.5 whitespace-nowrap">Project: C:\Users\danaukes\Desktop\power-supply-v1\power-supply-v1.kicad_pro</div>
        <div className="flex-1 border-l border-[#c8c8c8] pl-1">Local path: monitoring folder changes</div>
      </div>
      <Taskbar />
    </div>
  );
}
